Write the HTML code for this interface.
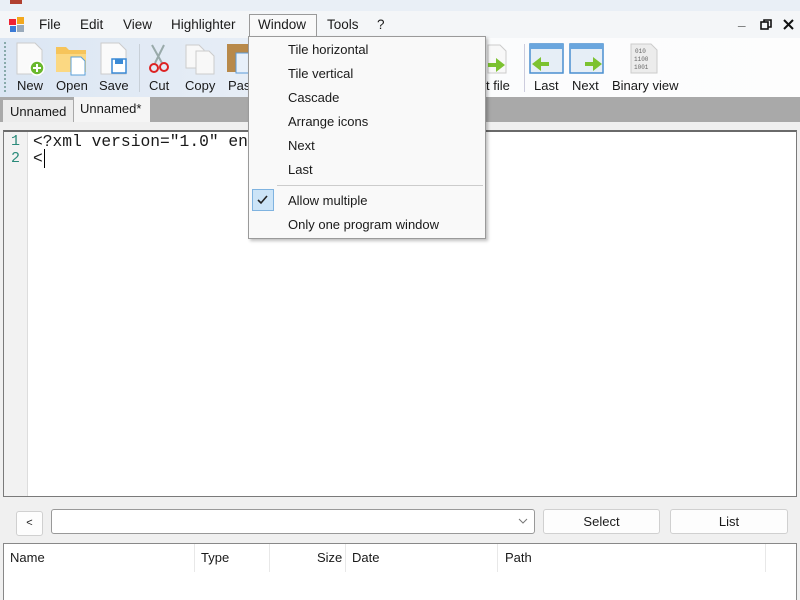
<!DOCTYPE html>
<html><head><meta charset="utf-8">
<style>
*{margin:0;padding:0;box-sizing:border-box}
body{width:800px;height:600px;overflow:hidden;background:#f0f0f0;font-family:"Liberation Sans",sans-serif;font-size:13px;color:#1a1a1a;position:relative}
.abs{position:absolute}
.title{left:0;top:0;width:800px;height:11px;background:#e9eff6}
.menubar{left:0;top:11px;width:800px;height:27px;background:#f4f6f8}
.menubar span{position:absolute;top:6px;font-size:13.5px}
.toolbar{left:0;top:38px;width:800px;height:59px;background:linear-gradient(90deg,#dbe6f3 0%,#e6edf6 30%,#fbfcfd 60%,#fdfdfd 100%)}
.tb{position:absolute;top:40px;font-size:13px}
.strip{left:0;top:97px;width:800px;height:25px;background:#a9a9a9}
.tab{position:absolute;font-size:13px}
.editor{left:3px;top:130px;width:794px;height:367px;background:#fff;border:1px solid #7a7a7a;border-top:2px solid #6a6a6a}
.gut{left:0;top:0;width:24px;height:100%;background:#f2f2f2;border-right:1px solid #ddd}
.mono{font-family:"Liberation Mono",monospace;font-size:16.3px}
.menu{left:248px;top:36px;width:238px;height:203px;background:#f9f9f9;border:1px solid #9a9a9a;box-shadow:2px 2px 3px rgba(0,0,0,.25)}
.menu div{position:absolute;left:39px;font-size:13px}
.btn{position:absolute;background:#fdfdfd;border:1px solid #d0d0d0;border-radius:3px;text-align:center;font-size:13px}
.list{left:3px;top:543px;width:794px;height:57px;background:#fff;border:1px solid #888;border-bottom:none}
.list span{position:absolute;top:6px;font-size:13px}
.col{position:absolute;top:0;width:1px;height:28px;background:#e8e8e8}
</style></head><body>
<div class="abs title"></div>
<div class="abs" style="left:10px;top:0;width:12px;height:4px;background:#b04030"></div>
<div class="abs menubar">
 <svg class="abs" style="left:9px;top:6px" width="16" height="16"><rect x="0" y="2" width="7" height="6" fill="#e23"/><rect x="8" y="0" width="7" height="7" fill="#f3a81e"/><rect x="1" y="9" width="6" height="6" fill="#3a7ad6"/><rect x="8" y="8" width="7" height="7" fill="#9ab"/></svg>
 <span style="left:39px">File</span><span style="left:80px">Edit</span><span style="left:123px">View</span><span style="left:171px">Highlighter</span>
 <div class="abs" style="left:249px;top:3px;width:68px;height:25px;border:1px solid #9a9a9a;border-bottom:none;background:#f9f9f9"></div>
 <span style="left:258px">Window</span><span style="left:327px">Tools</span><span style="left:377px">?</span>
 <span style="left:738px;top:2px;font-weight:bold">_</span>
 <svg class="abs" style="left:760px;top:8px" width="12" height="11"><rect x="1" y="3" width="7" height="7" fill="none" stroke="#111" stroke-width="1.6"/><path d="M4 3V1h7v7H8" fill="none" stroke="#111" stroke-width="1.6"/></svg>
 <svg class="abs" style="left:783px;top:8px" width="11" height="11"><path d="M1 1L10 10M10 1L1 10" stroke="#111" stroke-width="2"/></svg>
</div>
<div class="abs toolbar">
 <div class="abs" style="left:4px;top:4px;width:2px;height:50px;border-left:2px dotted #8aa"></div>
 <svg class="abs" style="left:14px;top:3px" width="34" height="36"><path d="M3 2h18l7 7v24H3z" fill="#fafafa" stroke="#ccc"/><circle cx="23" cy="27" r="7" fill="#6ab82e" stroke="#fff" stroke-width="1.5"/><path d="M23 23v8M19 27h8" stroke="#fff" stroke-width="2"/></svg>
 <svg class="abs" style="left:55px;top:3px" width="34" height="36"><path d="M1 6h10l3 3h17v22H1z" fill="#f6c45a"/><path d="M1 13h30v18H1z" fill="#fbd882"/><path d="M16 16h10l4 4v14H16z" fill="#fff" stroke="#5ba0d8"/></svg>
 <svg class="abs" style="left:98px;top:3px" width="34" height="36"><path d="M3 2h18l7 7v24H3z" fill="#fafafa" stroke="#ccc"/><rect x="14" y="18" width="14" height="14" fill="#fff" stroke="#3a8ad6" stroke-width="1.5"/><rect x="17" y="18" width="8" height="5" fill="#3a8ad6"/></svg>
 <div class="abs" style="left:139px;top:6px;width:1px;height:48px;background:#c8d0d8"></div>
 <svg class="abs" style="left:146px;top:5px" width="28" height="32"><path d="M6 2L16 20M18 2L9 20" stroke="#9aa" stroke-width="2"/><circle cx="8" cy="25" r="4" fill="none" stroke="#d22" stroke-width="2"/><circle cx="18" cy="24" r="4" fill="none" stroke="#d22" stroke-width="2"/></svg>
 <svg class="abs" style="left:184px;top:3px" width="34" height="36"><path d="M2 4h13l5 5v18H2z" fill="#f8f8f8" stroke="#ccc"/><path d="M12 10h13l5 5v18H12z" fill="#f8f8f8" stroke="#ccc"/></svg>
 <svg class="abs" style="left:226px;top:3px" width="24" height="36"><rect x="1" y="3" width="22" height="28" fill="#b8894a"/><rect x="10" y="12" width="14" height="20" fill="#e8f0fa" stroke="#5a9ad8"/></svg>
 <div class="tb" style="left:17px">New</div><div class="tb" style="left:56px">Open</div><div class="tb" style="left:99px">Save</div>
 <div class="tb" style="left:149px">Cut</div><div class="tb" style="left:185px">Copy</div><div class="tb" style="left:228px">Pas</div>
 <svg class="abs" style="left:486px;top:5px" width="22" height="32"><path d="M2 2h12l6 6v22H2z" fill="#f8f8f8" stroke="#ccc"/><path d="M2 20h8v-5l9 7-9 7v-5H2z" fill="#7cc230"/></svg>
 <div class="tb" style="left:486px">t file</div>
 <div class="abs" style="left:524px;top:6px;width:1px;height:48px;background:#ccd"></div>
 <svg class="abs" style="left:529px;top:5px" width="36" height="32"><rect x="1" y="1" width="33" height="29" fill="#e6eef6" stroke="#4a8fd0" stroke-width="1.5"/><rect x="1" y="1" width="33" height="5" fill="#6aa6de"/><path d="M20 19h-8v-5l-9 7 9 7v-5h8z" fill="#7cc230"/></svg>
 <svg class="abs" style="left:569px;top:5px" width="36" height="32"><rect x="1" y="1" width="33" height="29" fill="#e6eef6" stroke="#4a8fd0" stroke-width="1.5"/><rect x="1" y="1" width="33" height="5" fill="#6aa6de"/><path d="M16 19h8v-5l9 7-9 7v-5h-8z" fill="#7cc230"/></svg>
 <svg class="abs" style="left:630px;top:4px" width="28" height="32"><path d="M1 2h20l6 6v23H1z" fill="#ececec" stroke="#ccc"/><text x="5" y="11" font-family="Liberation Mono" font-size="6" fill="#666">010</text><text x="4" y="19" font-family="Liberation Mono" font-size="6" fill="#666">1100</text><text x="4" y="27" font-family="Liberation Mono" font-size="6" fill="#666">1001</text></svg>
 <div class="tb" style="left:534px">Last</div><div class="tb" style="left:572px">Next</div><div class="tb" style="left:612px">Binary view</div>
</div>
<div class="abs strip"></div>
<div class="abs" style="left:0;top:122px;width:800px;height:8px;background:#f0f0f0"></div>
<div class="abs" style="left:3px;top:100px;width:70px;height:22px;background:#ececec"></div>
<div class="tab" style="left:10px;top:104px">Unnamed</div>
<div class="abs" style="left:74px;top:97px;width:76px;height:25px;background:#f5f5f5"></div>
<div class="tab" style="left:80px;top:101px">Unnamed*</div>
<div class="abs editor">
 <div class="abs gut"></div>
 <div class="abs mono" style="left:7px;top:1px;color:#2a8a7a;line-height:17px;font-size:15px">1<br>2</div>
 <div class="abs mono" style="left:29px;top:1px;line-height:17px">&lt;?xml version="1.0" en<br>&lt;<span style="border-left:1px solid #000;margin-left:1px"></span></div>
</div>
<div class="btn" style="left:16px;top:511px;width:27px;height:25px;line-height:23px;font-size:11px">&lt;</div>
<div class="abs" style="left:51px;top:509px;width:484px;height:25px;background:#fff;border:1px solid #999;border-radius:3px"></div>
<svg class="abs" style="left:518px;top:518px" width="10" height="7"><path d="M1 1l4 4 4-4" fill="none" stroke="#777"/></svg>
<div class="btn" style="left:543px;top:509px;width:117px;height:25px;line-height:23px">Select</div>
<div class="btn" style="left:670px;top:509px;width:118px;height:25px;line-height:23px">List</div>
<div class="abs list">
 <span style="left:6px">Name</span><div class="col" style="left:190px"></div>
 <span style="left:197px">Type</span><div class="col" style="left:265px"></div>
 <span style="left:313px">Size</span><div class="col" style="left:341px"></div>
 <span style="left:348px">Date</span><div class="col" style="left:493px"></div>
 <span style="left:501px">Path</span><div class="col" style="left:761px"></div>
</div>
<div class="abs menu">
 <div style="top:5px">Tile horizontal</div>
 <div style="top:29px">Tile vertical</div>
 <div style="top:53px">Cascade</div>
 <div style="top:77px">Arrange icons</div>
 <div style="top:101px">Next</div>
 <div style="top:125px">Last</div>
 <span class="abs" style="left:28px;top:148px;width:206px;height:1px;background:#ccc"></span>
 <span class="abs" style="left:3px;top:152px;width:22px;height:22px;background:#cce4f7;border:1px solid #7fb3e0"></span>
 <svg class="abs" style="left:8px;top:158px" width="12" height="10"><path d="M1 5l3 3 6-7" fill="none" stroke="#222" stroke-width="1.6"/></svg>
 <div style="top:156px">Allow multiple</div>
 <div style="top:180px">Only one program window</div>
</div>
</body></html>
